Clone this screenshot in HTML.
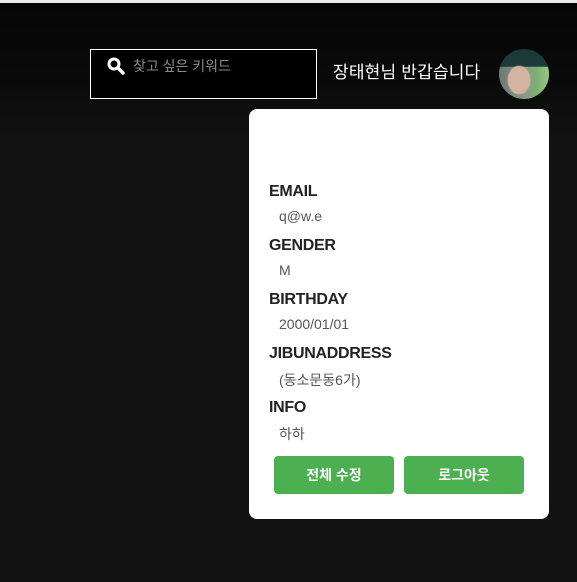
<!DOCTYPE html>
<html><head><meta charset="utf-8"><style>
body{margin:0;width:577px;height:582px;overflow:hidden;background:linear-gradient(#060606 0px,#0a0a0a 80px,#121212 140px,#121212);font-family:"Liberation Sans","Noto Sans CJK KR",sans-serif;position:relative}
.top{position:absolute;left:0;top:0;width:577px;height:3px;background:#ececec}
.search{position:absolute;left:90px;top:49px;width:225px;height:48px;border:1px solid #fff;background:#000}
.search span{position:absolute;left:42px;top:6px;color:#8a8a8a;font-size:14px}
.name{position:absolute;left:333px;top:58px;color:#fff;font-size:17px;letter-spacing:0.2px}
.av{position:absolute;left:499px;top:49px;width:50px;height:50px;border-radius:50%;background:radial-gradient(ellipse 12px 15px at 40% 62%,#d4b4a0 0 90%,transparent 100%),linear-gradient(180deg,#1c3a3a 0,#1c3a3a 35%,transparent 36%),linear-gradient(90deg,#6b7a70 0,#8a9a88 50%,#7ab070 75%,#9bc880);}
.card{position:absolute;left:249px;top:109px;width:300px;height:410px;background:#fff;border-radius:8px}
.l{position:absolute;left:20px;font-weight:bold;font-size:16px;color:#222;letter-spacing:-0.3px}
.v{position:absolute;left:30px;font-size:14px;color:#555}
.b{position:absolute;top:347px;width:120px;height:38px;background:#4caf50;border-radius:4px;color:#fff;font-weight:bold;font-size:14px;text-align:center;line-height:38px}
</style></head><body>
<div class="top"></div>
<div class="search"><svg style="position:absolute;left:16px;top:7px" width="18" height="18" viewBox="0 0 18 18"><circle cx="7" cy="7" r="5" fill="none" stroke="#fff" stroke-width="3"/><line x1="11" y1="11" x2="16" y2="16" stroke="#fff" stroke-width="3.5" stroke-linecap="round"/></svg><span>찾고 싶은 키워드</span></div>
<div class="name">장태현님 반갑습니다</div>
<div class="av"></div>
<div class="card">
<div class="l" style="top:74px">EMAIL</div><div class="v" style="top:99px">q@w.e</div>
<div class="l" style="top:128px">GENDER</div><div class="v" style="top:153px">M</div>
<div class="l" style="top:182px">BIRTHDAY</div><div class="v" style="top:207px">2000/01/01</div>
<div class="l" style="top:236px">JIBUNADDRESS</div><div class="v" style="top:261px">(동소문동6가)</div>
<div class="l" style="top:290px">INFO</div><div class="v" style="top:315px">하하</div>
<div class="b" style="left:25px">전체 수정</div><div class="b" style="left:155px">로그아웃</div>
</div>
</body></html>
